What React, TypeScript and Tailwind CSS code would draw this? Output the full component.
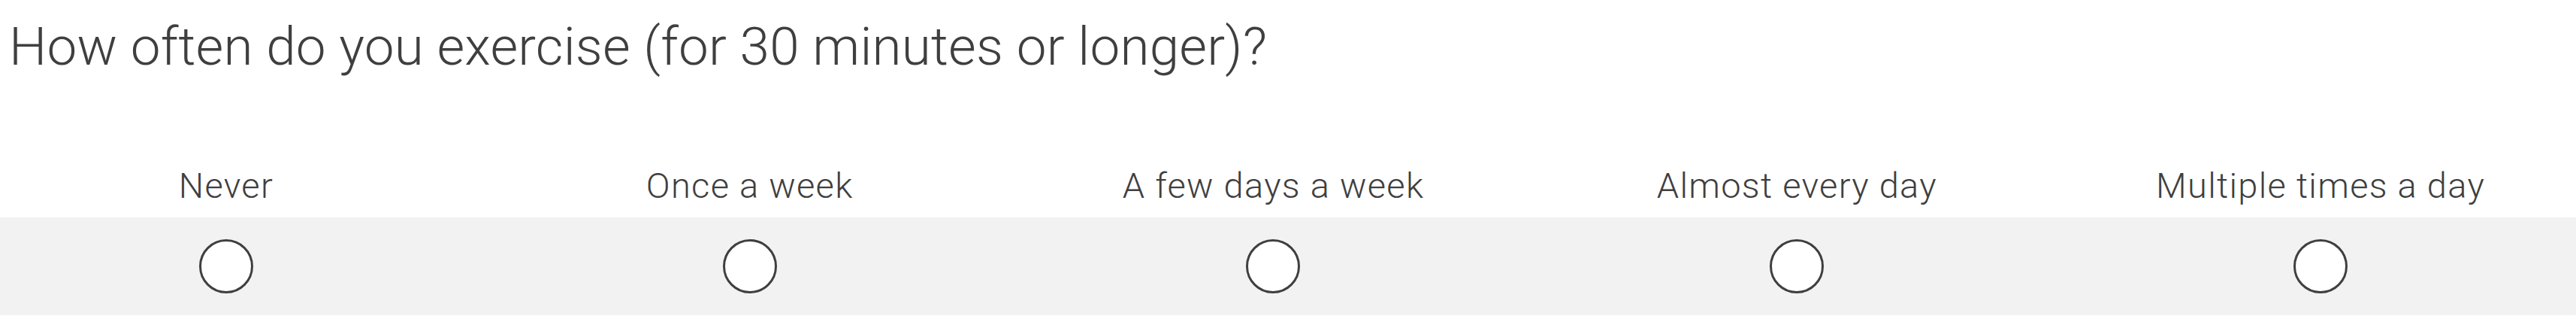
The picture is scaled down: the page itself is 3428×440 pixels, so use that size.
const options = [
  "Never",
  "Once a week",
  "A few days a week",
  "Almost every day",
  "Multiple times a day",
];

export default function App() {
  return (
    <div
      className="w-[3428px] h-[440px] bg-white text-[#3f3f3f]"
      style={{ fontFamily: "Roboto, 'Liberation Sans', sans-serif" }}
    >
      <h1 className="pt-[20px] pl-[12px] text-[71px] leading-[84px] font-light tracking-[0.2px]">
        How often do you exercise (for 30 minutes or longer)?
      </h1>
      <div className="mt-[115px] grid grid-cols-5 gap-x-[95px] pr-[39px]">
        {options.map((label) => (
          <div
            key={label}
            className="text-center text-[47px] leading-[56px] font-light tracking-[1.3px]"
          >
            {label}
          </div>
        ))}
      </div>
      <div className="mt-[14px] h-[130px] bg-[#f2f2f2]">
        <div className="grid h-full grid-cols-5 gap-x-[95px] pr-[39px]">
          {options.map((label) => (
            <div key={label} className="flex items-center justify-center">
              <span
                aria-label={label}
                className="block h-[72px] w-[72px] rounded-full border-[3px] border-[#3f3f3f] bg-white"
              />
            </div>
          ))}
        </div>
      </div>
    </div>
  );
}
